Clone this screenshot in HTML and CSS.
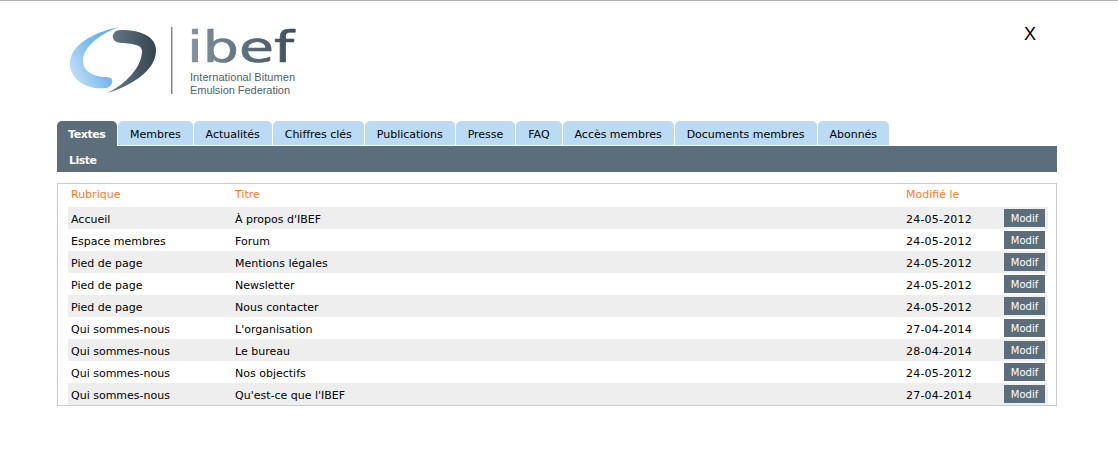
FILE: index.html
```html
<!DOCTYPE html>
<html lang="fr">
<head>
<meta charset="utf-8">
<title>IBEF</title>
<link rel="stylesheet" href="styles.css">
</head>
<body>
<div class="page">
  <header class="head">
    <svg class="logo" width="240" height="72" viewBox="0 0 240 72">
      <defs>
        <linearGradient id="lb" x1="0" y1="1" x2="1" y2="0.4">
          <stop offset="0" stop-color="#d6e8f7"/>
          <stop offset="0.6" stop-color="#79bcee"/>
          <stop offset="1" stop-color="#5aaee8"/>
        </linearGradient>
        <linearGradient id="db" x1="0" y1="0" x2="1" y2="0">
          <stop offset="0" stop-color="#6a7d8e"/>
          <stop offset="1" stop-color="#34444f"/>
        </linearGradient>
        <linearGradient id="wm" x1="0" y1="0" x2="1" y2="0">
          <stop offset="0" stop-color="#8596a4"/>
          <stop offset="1" stop-color="#3d4d5a"/>
        </linearGradient>
      </defs>
      <path fill="url(#lb)" d="M62 0C37 5 12 18 13 38C14 55 33 63 49 61C54 60 56 56 55 53C54 50 51 50 47 50C35 49 27 44 26 35C25 22 40 8 62 0Z"/>
      <path fill="url(#db)" d="M50 66C77 58 100 42 99 22C98 8 81 3 64 3C57 3 55 8 56 11C57 15 61 16 67 16C77 17 85 18 85 24C85 40 69 57 50 66Z"/>
      <rect class="sep" x="114" y="0" width="1.5" height="67"/>
      <text class="mark" x="130" y="35" textLength="107" lengthAdjust="spacingAndGlyphs" fill="url(#wm)" stroke="url(#wm)">ibef</text>
      <text class="tag" x="133" y="53.5" textLength="105">International Bitumen</text>
      <text class="tag" x="133" y="66.5" textLength="100">Emulsion Federation</text>
    </svg>
    <span class="close">X</span>
  </header>

  <nav class="tabs">
    <a class="tab active">Textes</a>
    <a class="tab">Membres</a>
    <a class="tab">Actualités</a>
    <a class="tab">Chiffres clés</a>
    <a class="tab">Publications</a>
    <a class="tab">Presse</a>
    <a class="tab">FAQ</a>
    <a class="tab">Accès membres</a>
    <a class="tab">Documents membres</a>
    <a class="tab">Abonnés</a>
  </nav>
  <div class="subbar"><a class="sub">Liste</a></div>

  <section class="box">
    <table class="list">
      <thead>
        <tr><th class="c1">Rubrique</th><th class="c2">Titre</th><th class="c3">Modifié le</th><th class="c4"></th></tr>
      </thead>
      <tbody>
        <tr><td>Accueil</td><td>À propos d'IBEF</td><td class="date">24-05-2012</td><td><a class="btn">Modif</a></td></tr>
        <tr><td>Espace membres</td><td>Forum</td><td class="date">24-05-2012</td><td><a class="btn">Modif</a></td></tr>
        <tr><td>Pied de page</td><td>Mentions légales</td><td class="date">24-05-2012</td><td><a class="btn">Modif</a></td></tr>
        <tr><td>Pied de page</td><td>Newsletter</td><td class="date">24-05-2012</td><td><a class="btn">Modif</a></td></tr>
        <tr><td>Pied de page</td><td>Nous contacter</td><td class="date">24-05-2012</td><td><a class="btn">Modif</a></td></tr>
        <tr><td>Qui sommes-nous</td><td>L'organisation</td><td class="date">27-04-2014</td><td><a class="btn">Modif</a></td></tr>
        <tr><td>Qui sommes-nous</td><td>Le bureau</td><td class="date">28-04-2014</td><td><a class="btn">Modif</a></td></tr>
        <tr><td>Qui sommes-nous</td><td>Nos objectifs</td><td class="date">24-05-2012</td><td><a class="btn">Modif</a></td></tr>
        <tr><td>Qui sommes-nous</td><td>Qu'est-ce que l'IBEF</td><td class="date">27-04-2014</td><td><a class="btn">Modif</a></td></tr>
      </tbody>
    </table>
  </section>
</div>
</body>
</html>
```

FILE: styles.css
```css
html, body {
  margin: 0;
  padding: 0;
  background: #fff;
}
body {
  border-top: 1px solid #b2b2b2;
  font-family: "DejaVu Sans", Verdana, sans-serif;
  font-size: 11px;
  color: #000;
  height: 469px;
  box-sizing: border-box;
  overflow: hidden;
}
.page {
  width: 1000px;
  margin-left: 57px;
}
.head {
  height: 120px;
  display: flex;
  justify-content: space-between;
  align-items: flex-start;
  box-sizing: border-box;
  padding-top: 26px;
  padding-right: 21px;
}
.logo {
  display: block;
  overflow: visible;
}
.sep { fill: #7d8b96; }
.mark {
  font-family: "DejaVu Sans", sans-serif;
  font-size: 42px;
  font-weight: 400;
  stroke-width: 0.7px;
  stroke-linejoin: round;
}
.tag {
  font-family: "Liberation Sans", Arial, sans-serif;
  font-size: 11px;
  fill: #4f5f6c;
}
.close {
  font-family: "Liberation Sans", Arial, sans-serif;
  font-size: 18px;
  line-height: 20px;
  margin-top: -3px;
}
.tabs {
  display: flex;
  gap: 1px;
  height: 25px;
}
.tab {
  padding: 0 12px;
  height: 24px;
  line-height: 28px;
  background: #bbdaf3;
  border-radius: 5px 5px 0 0;
  white-space: nowrap;
  letter-spacing: -0.02px;
}
.tab.active {
  height: 25px;
  width: 37px;
  padding: 0 12px 0 11px;
  background: #5c6e7c;
  color: #fff;
  font-weight: bold;
  letter-spacing: -0.4px;
}
.subbar {
  height: 26px;
  line-height: 30px;
  background: #5c6e7c;
  padding-left: 12px;
  color: #fff;
  font-weight: bold;
  letter-spacing: -0.5px;
}
.box {
  margin-top: 11px;
  border: 1px solid #ccc;
  padding: 0 8px 0 10px;
  height: 223px;
  box-sizing: border-box;
}
.list {
  width: 980px;
  border-collapse: collapse;
  table-layout: fixed;
}
.list th {
  height: 23px;
  padding: 0 0 2px 3px;
  box-sizing: border-box;
  text-align: left;
  font-weight: normal;
  color: #ff7c1e;
}
.c1 { width: 164px; }
.c2 { width: 671px; }
.c3 { width: 98px; }
.list td {
  height: 22px;
  padding: 3px 0 0 3px;
  box-sizing: border-box;
  white-space: nowrap;
}
.list td.date { letter-spacing: 0.2px; }
.list tbody tr:nth-child(odd) { background: #eee; }
.btn {
  display: block;
  width: 41px;
  height: 18px;
  line-height: 19px;
  margin-top: -3px;
  background: #5c6e7c;
  color: #fff;
  font-size: 10px;
  text-align: center;
}
```
